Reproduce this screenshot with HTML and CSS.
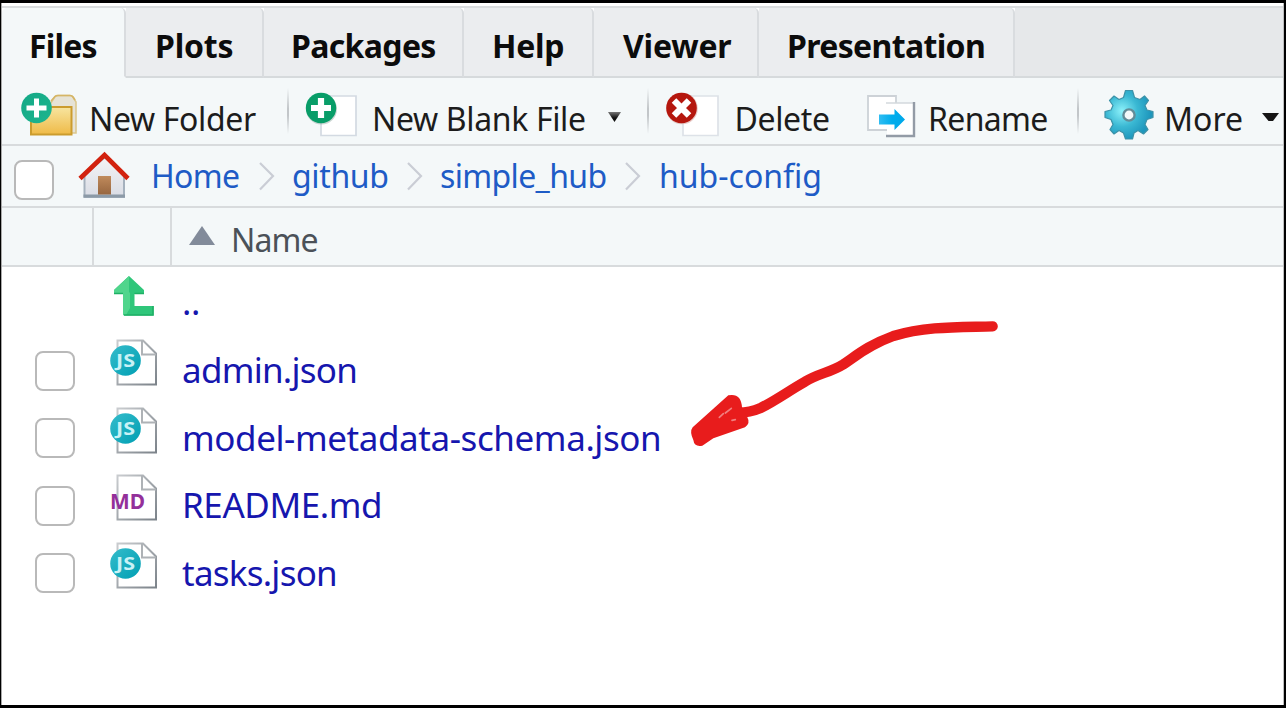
FILE: index.html
```html
<!DOCTYPE html>
<html lang="en">
<head>
<meta charset="utf-8">
<title>Files</title>
<link rel="stylesheet" href="styles.css">
</head>
<body>
<svg class="defs" width="0" height="0" aria-hidden="true">
  <defs>
    <linearGradient id="gold" x1="0" y1="0" x2="0" y2="1"><stop offset="0" stop-color="#f7e5a0"/><stop offset="1" stop-color="#efba47"/></linearGradient>
    <linearGradient id="mint" x1="0" y1="0" x2="1" y2="1"><stop offset="0" stop-color="#12a886"/><stop offset="1" stop-color="#1fb58e"/></linearGradient>
    <linearGradient id="wall" x1="0" y1="0" x2="0" y2="1"><stop offset="0" stop-color="#f4f4f6"/><stop offset="1" stop-color="#d9dce4"/></linearGradient>
    <linearGradient id="door" x1="0" y1="0" x2="0" y2="1"><stop offset="0" stop-color="#c08a5c"/><stop offset="1" stop-color="#97663f"/></linearGradient>
    <linearGradient id="edge" x1="0" y1="0" x2="1" y2="1"><stop offset="0" stop-color="#c9cccf"/><stop offset="1" stop-color="#7c838a"/></linearGradient>
    <linearGradient id="teal" x1="0" y1="0" x2="1" y2="1"><stop offset="0" stop-color="#35bccb"/><stop offset="1" stop-color="#009fb3"/></linearGradient>
    <linearGradient id="blue" x1="0" y1="0" x2="1" y2="0"><stop offset="0" stop-color="#30bdf2"/><stop offset=".5" stop-color="#00adec"/><stop offset="1" stop-color="#00a8ea"/></linearGradient>
    <linearGradient id="dark" x1="0" y1="0" x2="0" y2="1"><stop offset="0" stop-color="#777"/><stop offset=".6" stop-color="#111"/></linearGradient>
    <radialGradient id="gear" cx=".35" cy=".42" r=".6"><stop offset="0" stop-color="#8cf1fa"/><stop offset=".55" stop-color="#3ab8d3"/><stop offset="1" stop-color="#1e97bd"/></radialGradient>
    <symbol id="page" viewBox="0 0 50 50">
      <path d="M7.500 4.500H33L46 17.500V48.500H7.500Z" fill="#fff" stroke="url(#edge)" stroke-width="2"/>
      <path d="M32 4.500V18.500H46" fill="none" stroke="#aeb2b6" stroke-width="2"/>
    </symbol>
    <symbol id="js" viewBox="0 0 50 50">
      <use href="#page" width="50" height="50"/>
      <circle cx="15.500" cy="24.500" r="15.300" fill="url(#teal)"/>
      <text x="6" y="30.500" class="js-text" textLength="19" lengthAdjust="spacingAndGlyphs">JS</text>
    </symbol>
  </defs>
</svg>
<main class="pane">
  <nav class="tabs">
    <span class="tab active">Files</span>
    <span class="tab">Plots</span>
    <span class="tab">Packages</span>
    <span class="tab">Help</span>
    <span class="tab">Viewer</span>
    <span class="tab last">Presentation</span>
    <span class="strip"></span>
  </nav>

  <div class="toolbar">
    <svg width="60" height="50" viewBox="0 0 60 50">
      <path d="M29 15L35 5.500Q36 4.500 38 4.500H50Q52 4.500 53 6L56 11V42H50" fill="#e6e3d6" stroke="#dcc88f" stroke-width="1.600"/>
      <path d="M31 10L35 5.500Q36 4.500 38 4.500H50Q52 4.500 53 6L55 9" fill="none" stroke="#d5b566" stroke-width="1.600"/>
      <rect x="11" y="16" width="40.500" height="27.500" fill="url(#gold)" stroke="#cb9c2e" stroke-width="2"/>
      <circle cx="16.500" cy="17" r="15.300" fill="url(#mint)"/>
      <path d="M16.500 7.500V26.500M6.500 17H26.500" stroke="#fff" stroke-width="5"/>
    </svg>
    <span class="snug">New Folder</span>
    <i class="sep"></i>
    <svg width="60" height="50" viewBox="0 0 60 50">
      <path d="M16 5H51V44.500H16Z" fill="#fff" stroke="#d3dae2" stroke-width="1.700"/>
      <circle cx="16.500" cy="18" r="15.500" fill="#98ada7" opacity=".5"/>
      <circle cx="16" cy="17" r="15.200" fill="#089d68"/>
      <path d="M16 7V27M6 17H26" stroke="#fff" stroke-width="6.200"/>
    </svg>
    <span class="snug">New Blank File</span>
    <svg width="18" height="50" viewBox="0 0 18 50"><path d="M1 21H14L7.500 31Z" fill="url(#dark)"/></svg>
    <i class="sep"></i>
    <svg width="60" height="50" viewBox="0 0 60 50">
      <path d="M18 5H53V44.500H18Z" fill="#fff" stroke="#dde2e8" stroke-width="1.700"/>
      <circle cx="17" cy="17.500" r="15.800" fill="#d9a8a4" opacity=".6"/>
      <circle cx="16.500" cy="17" r="15.300" fill="#b5170e"/>
      <path d="M9 9.500L24 24.500M24 9.500L9 24.500" stroke="#fff" stroke-width="6.400"/>
    </svg>
    <span class="snug">Delete</span>
    <svg width="55" height="50" viewBox="0 0 55 50">
      <path d="M2 5H30V39H2Z" fill="#fff" stroke="#cdd2d7" stroke-width="1.800"/>
      <path d="M21 12H48V45H21Z" fill="#fff"/>
      <path d="M20 12H47" stroke="#d3d8dc" stroke-width="1.500"/>
      <path d="M48 11V45H20" fill="none" stroke="#939ba6" stroke-width="2.400"/>
      <path d="M13 23.500H28.500V18L39 28.500L28.500 39V33.500H13Z" fill="url(#blue)"/>
    </svg>
    <span class="tight">Rename</span>
    <i class="sep"></i>
    <svg width="52" height="54" viewBox="-26 -23.500 52 54">
      <g fill="url(#gear)" stroke="#3c92a8" stroke-width="1.200" stroke-linejoin="round">
        <path d="M-3.500-24H3.500L5.500-17L11-15L15.500-18.500L19.500-14L16-9L18-4.500L24-3V3L18 5L16 10L19 15L14.500 19.500L9 16L5 18.500L3.500 24.500H-3.500L-5.500 18.500L-10 16L-15 19.500L-19 15L-16 10L-18 5L-24 3V-3L-18-4.500L-16-9L-19.500-14L-15-18.500L-10-15L-5.500-17Z"/>
      </g>
      <circle r="5.600" fill="#f4f8f9" stroke="#628c98" stroke-width="2.400" cy=".5"/>
    </svg>
    <span>More</span>
    <svg width="20" height="50" viewBox="0 0 20 50"><path d="M1 22H18L12 30H7.500Z" fill="#151515"/></svg>
  </div>

  <div class="crumbs">
    <i class="check"></i>
    <svg width="54" height="50" viewBox="0 0 54 50">
      <path d="M6.500 25L27 7L46 25V47H6.500Z" fill="url(#wall)" stroke="#a5b1bd" stroke-width="2"/>
      <path d="M5.500 46H47" stroke="#8c9aa7" stroke-width="3"/>
      <rect x="20" y="26" width="13" height="18.500" fill="url(#door)"/>
      <path d="M2 28.500L26.500 5L50 28.500" fill="none" stroke="#d2220f" stroke-width="4.600"/>
    </svg>
    <span class="tight">Home</span>
    <svg width="20" height="50" viewBox="0 0 20 50"><path d="M3 13L16 26L3 39.500" fill="none" stroke="#cacdd5" stroke-width="2.200"/></svg>
    <span class="snug">github</span>
    <svg width="20" height="50" viewBox="0 0 20 50"><path d="M3 13L16 26L3 39.500" fill="none" stroke="#cacdd5" stroke-width="2.200"/></svg>
    <span class="tight">simple_hub</span>
    <svg width="20" height="50" viewBox="0 0 20 50"><path d="M3 13L16 26L3 39.500" fill="none" stroke="#cacdd5" stroke-width="2.200"/></svg>
    <span>hub-config</span>
  </div>

  <div class="head">
    <span></span><span></span>
    <span class="name"><svg width="28" height="22" viewBox="0 0 28 22"><path d="M1 19L14 0L27 19Z" fill="#828b9a"/></svg>Name</span>
  </div>

  <div class="files">
    <div class="row up">
      <i></i>
      <svg width="50" height="50" viewBox="0 0 50 50">
        <path d="M19 6L34 20V24H24.500V36H43.500V45.500H14.500Q13 45.500 13 44V24H4V20Z" fill="#2fc67a"/>
        <path d="M19 6V22L20 23V38L16 45H14.500Q13 45 13 44V24H4V20Z" fill="#50d58c"/>
        <path d="M4 23.500H13M24.500 23.500H34M14 45H43V36" fill="none" stroke="#1fb065" stroke-width="1.600"/>
      </svg>
      <a>..</a>
    </div>
    <div class="row"><i class="check"></i><svg width="50" height="50"><use href="#js"/></svg><a class="narrow">admin.json</a></div>
    <div class="row"><i class="check"></i><svg width="50" height="50"><use href="#js"/></svg><a>model-metadata-schema.json</a></div>
    <div class="row"><i class="check"></i><svg width="50" height="50"><use href="#page"/><text x="0" y="37.500" class="md-text" textLength="35" lengthAdjust="spacingAndGlyphs">MD</text></svg><a>README.md</a></div>
    <div class="row"><i class="check"></i><svg width="50" height="50"><use href="#js"/></svg><a class="narrow">tasks.json</a></div>
  </div>

  <svg class="arrow" width="360" height="160" viewBox="0 0 1080 480">
    <path d="M998 79C900 82 800 78 700 108C625 135 585 170 550 193C510 218 475 220 435 245C390 270 350 300 300 325C270 338 250 338 235 338" fill="none" stroke="#e81c1c" stroke-width="31" stroke-linecap="round"/>
    <path d="M205 286Q243 278 246 322L262 352Q272 370 255 382L160 415L127 437Q103 442 100 420Q88 395 98 382Z" fill="#e81c1c"/>
    <path d="M178 352L190 341M196 339L214 325M216 361L226 359" stroke="#f08080" stroke-width="5" stroke-linecap="round"/>
  </svg>
</main>
</body>
</html>
```
FILE: styles.css
```css
* { box-sizing: border-box; }
body {
  margin: 0;
  font: 32px/1 "Noto Sans", "Open Sans", sans-serif;
  color: #1c1c1c;
}
svg { display: block; overflow: visible; }
.defs { position: absolute; }
.pane {
  position: relative;
  width: 1286px;
  height: 708px;
  padding: 3px 1px 0 1px;
  border: solid #000;
  border-width: 3px 2px 3px 1px;
  box-shadow: inset 1px 0 #a9a9a9, inset -1px 0 #bdbdbd;
  overflow: hidden;
  background: #fff;
}

/* tabs */
.tabs {
  display: flex;
  height: 72px;
  border-top: 2px solid #d9dcde;
  font-weight: 700;
  letter-spacing: -.65px;
  color: #0c0c0c;
}
.tab {
  flex: none;
  padding: 22px 0 0 29px;
  background: #ebedef;
  border-right: 2px solid #d9dcdf;
  border-bottom: 2px solid #d6dadc;
  border-radius: 0 5px 0 0;
}
.tab.active { width: 124px; padding-left: 27px; background: #f4f8f9; border-bottom-color: #f4f8f9; border-radius: 5px 5px 0 0; letter-spacing: -.8px; }
.tab:nth-child(2) { width: 138px; letter-spacing: -.2px; }
.tab:nth-child(3) { width: 200px; padding-left: 27px; }
.tab:nth-child(4) { width: 130px; padding-left: 28px; letter-spacing: -.3px; }
.tab:nth-child(5) { width: 165px; letter-spacing: -.2px; }
.tab.last { width: 256px; padding-left: 28px; }
.strip { flex: 1; background: #e6e8ea; border-bottom: 2px solid #d6dadc; }

/* toolbar */
.toolbar {
  display: grid;
  grid-template-columns: 69px 198px 18px 67px 234.5px 40.5px 18px 69.5px 131px 62.5px 149px 25.5px 61.5px 97px 20px;
  align-items: start;
  height: 68px;
  padding: 13px 0 0 18px;
  background: #f4f8f9;
  border-bottom: 2px solid #d8dbdd;
}
.toolbar span { padding-top: 12px; white-space: nowrap; }
.snug { letter-spacing: -.35px; }
.tight { letter-spacing: -.65px; }
.sep {
  width: 2px;
  height: 46px;
  margin-top: -3px;
  background: linear-gradient(#f4f8f9, #c2c6c9 45%, #c2c6c9 60%, #f4f8f9);
}

/* breadcrumbs */
.crumbs {
  display: grid;
  grid-template-columns: 64px 73px 106px 35px 113px 35px 183px 36px 1fr;
  height: 62px;
  padding: 4px 0 0 12px;
  background: #f4f8f9;
  border-bottom: 2px solid #d8dbdd;
  color: #1e5bc6;
}
.crumbs span { padding-top: 10px; white-space: nowrap; }
.check {
  width: 40px;
  height: 40px;
  border: 2px solid #b9b9b9;
  border-radius: 8px;
  background: #fff;
}
.crumbs .check { margin-top: 10px; }

/* column header */
.head {
  display: grid;
  grid-template-columns: 92px 78px 1fr;
  height: 59px;
  background: #f4f8f9;
  border-bottom: 2px solid #d8dbdd;
  color: #4b5158;
}
.head > span { border-right: 2px solid #d8dbdd; }
.head > .name { display: flex; gap: 15px; padding: 16px 0 0 16px; border-right: 0; letter-spacing: -.9px; }
.head svg { margin-top: 2px; }

/* file rows */
.row {
  display: grid;
  grid-template-columns: 75px 72px 1fr;
  height: 67.5px;
  padding: 14px 0 0 33px;
  font-size: 35px;
  letter-spacing: -.42px;
  color: #1616ae;
}
.row .check { margin-top: 2px; }
.row svg { margin-top: -12.5px; }
.row a { padding-top: 3.5px; line-height: 35px; }
.row .narrow { letter-spacing: -.75px; }
.row.up svg { margin-top: -11px; }
.row.up a { padding-top: 3px; }
.js-text { font: 700 17px "Noto Sans", sans-serif; fill: #c9f2f6; letter-spacing: 0; }
.md-text { font: 700 21px "Noto Sans", sans-serif; fill: #93309a; letter-spacing: 0; }

/* hand-drawn pointer over the list */
.arrow { position: absolute; left: 659px; top: 297px; }
```
